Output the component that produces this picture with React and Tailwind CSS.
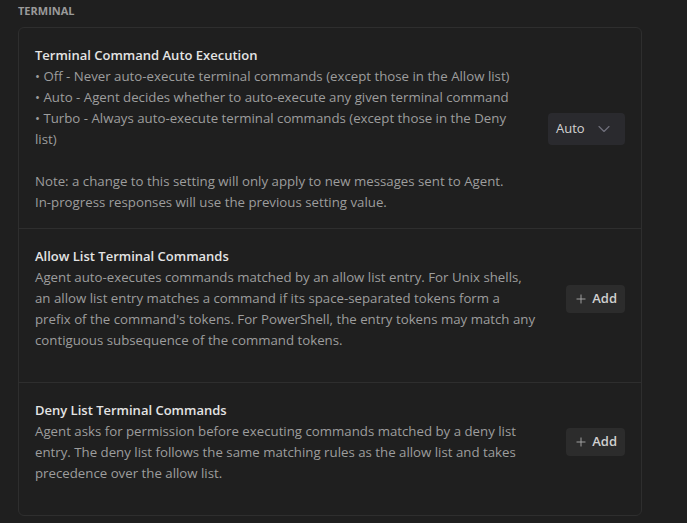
import { ChevronDown, Plus } from "lucide-react";

const font = { fontFamily: '"Open Sans", "Noto Sans", sans-serif' };

function AddButton() {
  return (
    <button className="flex h-[28px] items-center gap-[4px] rounded-[4px] bg-[#2c2c2c] pl-[8px] pr-[8px] text-[13px] font-semibold text-[#d0d0d0]">
      <Plus size={14} strokeWidth={1.6} className="text-[#a8a8a8]" />
      <span>Add</span>
    </button>
  );
}

function Setting({ title, lines, control, last, extra }) {
  return (
    <div
      className={
        "px-4 pt-[17px] " +
        (extra ? "pb-[31px] " : "pb-[15px] ") +
        (last ? "" : "border-b border-[#2e2e2e]")
      }
    >
      <div className="flex items-center">
        <div className="min-w-0 flex-1 leading-[21px]">
          <div className="text-[13px] font-semibold text-[#e4e4e4]">{title}</div>
          <div className="text-[13.25px] text-[#9d9d9d]">
            {lines.map((l, i) =>
              l === "" ? (
                <div key={i} className="h-[21px]" />
              ) : (
                <div key={i} className="whitespace-nowrap">
                  {l}
                </div>
              )
            )}
          </div>
        </div>
        <div className="flex w-[91px] shrink-0 justify-end">{control}</div>
      </div>
    </div>
  );
}

export default function App() {
  return (
    <div className="min-h-screen bg-[#1f1f1f] pl-[18px] pt-[4px]" style={font}>
      <div className="mb-[9px] text-[11px] font-bold leading-[14px] text-[#9a9a9a]">
        TERMINAL
      </div>
      <div className="w-[624px] rounded-[6px] border border-[#2e2e2e] bg-[#1f1f1f]">
        <Setting
          title="Terminal Command Auto Execution"
          lines={[
            "• Off - Never auto-execute terminal commands (except those in the Allow list)",
            "• Auto - Agent decides whether to auto-execute any given terminal command",
            "• Turbo - Always auto-execute terminal commands (except those in the Deny",
            "list)",
            "",
            "Note: a change to this setting will only apply to new messages sent to Agent.",
            "In-progress responses will use the previous setting value.",
          ]}
          control={
            <button className="flex h-[32px] w-[77px] items-center justify-between rounded-[4px] bg-[#2a2a2e] pl-[8px] pr-[11px] text-[13px] text-[#d2d2d2]">
              <span>Auto</span>
              <ChevronDown size={20} strokeWidth={1.4} className="text-[#6f6f7b]" />
            </button>
          }
        />
        <Setting
          title="Allow List Terminal Commands"
          control={<AddButton />}
          extra
          lines={[
            "Agent auto-executes commands matched by an allow list entry. For Unix shells,",
            "an allow list entry matches a command if its space-separated tokens form a",
            "prefix of the command's tokens. For PowerShell, the entry tokens may match any",
            "contiguous subsequence of the command tokens.",
          ]}
        />
        <Setting
          title="Deny List Terminal Commands"
          control={<AddButton />}
          extra
          last
          lines={[
            "Agent asks for permission before executing commands matched by a deny list",
            "entry. The deny list follows the same matching rules as the allow list and takes",
            "precedence over the allow list.",
          ]}
        />
      </div>
    </div>
  );
}
